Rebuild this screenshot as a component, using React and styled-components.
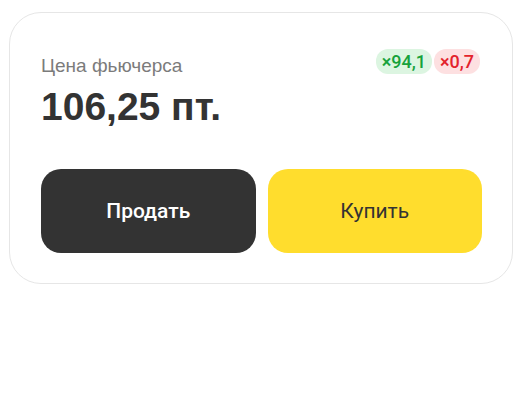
import React from 'react';
import styled, { createGlobalStyle } from 'styled-components';

const Global = createGlobalStyle`
  body {
    margin: 0;
    background: #ffffff;
    font-family: "Liberation Sans", Arial, sans-serif;
  }
`;

const Card = styled.div`
  box-sizing: border-box;
  width: 504px;
  margin: 12px 0 0 9px;
  padding: 36px 30px 30px 31px;
  border: 1px solid #e6e6e6;
  border-radius: 32px;
  background: #fff;
`;

const Header = styled.div`
  display: flex;
  justify-content: space-between;
  align-items: flex-start;
`;

const Info = styled.div`
  display: flex;
  flex-direction: column;
`;

const Label = styled.div`
  font-size: 19px;
  line-height: 22px;
  margin-top: 6px;
  color: #7b7b7b;
`;

const Price = styled.div`
  font-size: 39px;
  line-height: 44px;
  font-weight: 700;
  color: #333333;
  margin-top: 8px;
`;

const Badges = styled.div`
  display: flex;
  gap: 2px;
  margin-right: 2px;
`;

const Badge = styled.span`
  display: inline-flex;
  align-items: center;
  height: 25px;
  padding: 0 6px;
  border-radius: 12px;
  font-family: Roboto, "Liberation Sans", sans-serif;
  font-size: 18px;
  font-weight: 500;
  background: ${(p) => (p.up ? '#dcf5e1' : '#fde0e1')};
  color: ${(p) => (p.up ? '#17a23b' : '#e3232c')};
`;

const Actions = styled.div`
  display: grid;
  grid-template-columns: 1fr 1fr;
  gap: 12px;
  margin-top: 40px;
`;

const Button = styled.button`
  height: 84px;
  border: none;
  border-radius: 20px;
  font-family: Roboto, "Liberation Sans", sans-serif;
  font-size: 21px;
  font-weight: ${(p) => (p.dark ? 500 : 400)};
  background: ${(p) => (p.dark ? '#333333' : '#ffdd2d')};
  color: ${(p) => (p.dark ? '#ffffff' : '#333333')};
  cursor: pointer;
`;

export default function App() {
  return (
    <>
      <Global />
      <Card>
        <Header>
          <Info>
            <Label>Цена фьючерса</Label>
            <Price>106,25 пт.</Price>
          </Info>
          <Badges>
            <Badge up>×94,1</Badge>
            <Badge>×0,7</Badge>
          </Badges>
        </Header>
        <Actions>
          <Button dark>Продать</Button>
          <Button>Купить</Button>
        </Actions>
      </Card>
    </>
  );
}
